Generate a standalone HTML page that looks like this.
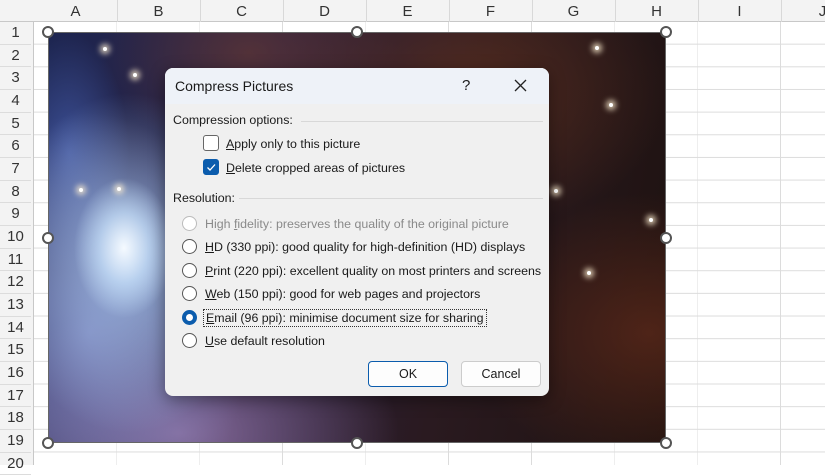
<!DOCTYPE html>
<html><head><meta charset="utf-8"><style>
*{margin:0;padding:0;box-sizing:border-box}
body{width:825px;height:465px;overflow:hidden;background:#fff;font-family:"Liberation Sans",sans-serif;position:relative}
.grid{position:absolute;left:34px;top:22px;right:0;bottom:0;
background-image:linear-gradient(to right,#dcdcdc 1px,transparent 1px),linear-gradient(to bottom,#dcdcdc 1px,transparent 1px);
background-size:83px 22.67px;background-position:82px 0,0 -1px}
.colh{position:absolute;left:0;top:0;width:825px;height:22px;background:#f3f3f3;border-bottom:1px solid #c8c8c8}
.colh span{position:absolute;top:3px;width:83px;text-align:center;font-size:15px;color:#333}
.colh i{position:absolute;top:0;width:1px;height:22px;background:#d8d8d8}
.rowh{position:absolute;left:0;top:22px;width:34px;height:443px;background:#f3f3f3;border-right:1px solid #c8c8c8}
.rowh span{position:absolute;left:0;width:31px;text-align:center;font-size:15px;color:#333;height:22.67px;line-height:22.67px;border-bottom:1px solid #dcdcdc}
.img{position:absolute;left:48px;top:32px;width:618px;height:411px;border:1px solid #666;overflow:hidden;
background:
radial-gradient(ellipse 50px 70px at 75px 215px,rgba(245,250,255,1),rgba(200,225,250,.7) 50%,transparent 100%),
radial-gradient(ellipse 130px 170px at 80px 230px,rgba(170,200,240,.8),transparent 100%),
radial-gradient(ellipse 160px 220px at 40px 300px,rgba(130,140,200,.8),transparent 100%),
radial-gradient(ellipse 220px 130px at 130px 400px,rgba(150,120,170,.85),transparent 100%),
radial-gradient(ellipse 60px 120px at 20px 120px,rgba(80,110,200,.6),transparent 100%),
radial-gradient(ellipse 180px 140px at 600px 300px,rgba(90,40,25,.8),transparent 100%),
radial-gradient(ellipse 200px 140px at 420px 60px,rgba(100,50,30,.7),transparent 100%),
radial-gradient(ellipse 150px 100px at 200px 20px,rgba(110,60,50,.6),transparent 100%),
linear-gradient(100deg,#1d2550 0%,#2a2040 35%,#2a1a20 65%,#1e1210 100%)}
.star{position:absolute;width:4px;height:4px;border-radius:50%;background:#fff;box-shadow:0 0 6px 3px rgba(255,240,210,.8)}
.h{position:absolute;width:12px;height:12px;border-radius:50%;background:#fff;border:2px solid #555}
.dlg{position:absolute;left:165px;top:68px;width:384px;height:328px;background:#f0f0f0;border-radius:8px;box-shadow:0 4px 16px rgba(0,0,0,.4);overflow:hidden;font-size:12.4px;color:#1a1a1a}
.tb{height:36px;background:#eef2f8;position:relative}
.tb .t{position:absolute;left:10px;top:10px;font-size:14px}
.abs{position:absolute;white-space:nowrap}
.sep{position:absolute;height:1px;background:#d8d8d8}
.cb{position:absolute;width:16px;height:16px;border:1px solid #666;border-radius:3px;background:#fff}
.cb.on{background:#0b5cad;border-color:#0b5cad}
.rd{position:absolute;width:15px;height:15px;border-radius:50%;border:1px solid #555;background:#fff}
.rd.dis{border-color:#bbb}
.rd.on{border:4px solid #0b5cad}
u{text-decoration:underline}
.btn{position:absolute;top:293px;width:80px;height:26px;border:1px solid #ccc;border-radius:4px;background:#fdfdfd;text-align:center;line-height:24px;font-size:12.5px}
</style></head><body>
<div class="grid"></div>
<div class="colh">
<span style="left:34px">A</span><span style="left:117px">B</span><span style="left:200px">C</span><span style="left:283px">D</span><span style="left:366px">E</span><span style="left:449px">F</span><span style="left:532px">G</span><span style="left:615px">H</span><span style="left:698px">I</span><span style="left:781px">J</span>
<i style="left:117px"></i><i style="left:200px"></i><i style="left:283px"></i><i style="left:366px"></i><i style="left:449px"></i><i style="left:532px"></i><i style="left:615px"></i><i style="left:698px"></i><i style="left:781px"></i>
</div>
<div class="rowh">
<span style="top:0">1</span><span style="top:22.67px">2</span><span style="top:45.33px">3</span><span style="top:68px">4</span><span style="top:90.67px">5</span><span style="top:113.33px">6</span><span style="top:136px">7</span><span style="top:158.67px">8</span><span style="top:181.33px">9</span><span style="top:204px">10</span><span style="top:226.67px">11</span><span style="top:249.33px">12</span><span style="top:272px">13</span><span style="top:294.67px">14</span><span style="top:317.33px">15</span><span style="top:340px">16</span><span style="top:362.67px">17</span><span style="top:385.33px">18</span><span style="top:408px">19</span><span style="top:430.67px">20</span>
</div>
<div class="img">
<div class="star" style="left:54px;top:14px"></div>
<div class="star" style="left:84px;top:40px"></div>
<div class="star" style="left:68px;top:154px"></div>
<div class="star" style="left:30px;top:155px"></div>
<div class="star" style="left:546px;top:13px"></div>
<div class="star" style="left:560px;top:70px"></div>
<div class="star" style="left:505px;top:156px"></div>
<div class="star" style="left:538px;top:238px"></div>
<div class="star" style="left:600px;top:185px"></div>
</div>
<div class="h" style="left:42px;top:26px"></div><div class="h" style="left:351px;top:26px"></div><div class="h" style="left:660px;top:26px"></div>
<div class="h" style="left:42px;top:232px"></div><div class="h" style="left:660px;top:232px"></div>
<div class="h" style="left:42px;top:437px"></div><div class="h" style="left:351px;top:437px"></div><div class="h" style="left:660px;top:437px"></div>
<div class="dlg">
<div class="tb"><span class="t">Compress Pictures</span>
<span class="abs" style="left:297px;top:9px;font-size:15px">?</span>
<svg class="abs" style="left:349px;top:11px" width="13" height="13" viewBox="0 0 13 13"><path d="M1 1L12 12M12 1L1 12" stroke="#222" stroke-width="1.3"/></svg>
</div>
<span class="abs" style="left:8px;top:45px">Compression options:</span>
<div class="sep" style="left:136px;right:6px;top:53px"></div>
<div class="cb" style="left:38px;top:67px"></div>
<span class="abs" style="left:61px;top:69px"><u>A</u>pply only to this picture</span>
<div class="cb on" style="left:38px;top:91px"><svg width="14" height="14" viewBox="0 0 14 14" style="position:absolute;left:0;top:0"><path d="M3.5 7.5L6 10L11 4.5" stroke="#fff" stroke-width="1.3" fill="none"/></svg></div>
<span class="abs" style="left:61px;top:93px"><u>D</u>elete cropped areas of pictures</span>
<span class="abs" style="left:8px;top:123px">Resolution:</span>
<div class="sep" style="left:74px;right:6px;top:130px"></div>
<div class="rd dis" style="left:17px;top:148px"></div>
<span class="abs" style="left:40px;top:149px;color:#8a8a8a">High <u>f</u>idelity: preserves the quality of the original picture</span>
<div class="rd" style="left:17px;top:171px"></div>
<span class="abs" style="left:40px;top:172px"><u>H</u>D (330 ppi): good quality for high-definition (HD) displays</span>
<div class="rd" style="left:17px;top:195px"></div>
<span class="abs" style="left:40px;top:196px"><u>P</u>rint (220 ppi): excellent quality on most printers and screens</span>
<div class="rd" style="left:17px;top:218px"></div>
<span class="abs" style="left:40px;top:219px"><u>W</u>eb (150 ppi): good for web pages and projectors</span>
<div class="rd on" style="left:17px;top:242px"></div>
<span class="abs" style="left:38px;top:241px;border:1px dotted #333;padding:1px 2px"><u>E</u>mail (96 ppi): minimise document size for sharing</span>
<div class="rd" style="left:17px;top:265px"></div>
<span class="abs" style="left:40px;top:266px"><u>U</u>se default resolution</span>
<div class="btn" style="left:203px;border:1px solid #0b5cad">OK</div>
<div class="btn" style="left:296px">Cancel</div>
</div>
</body></html>
